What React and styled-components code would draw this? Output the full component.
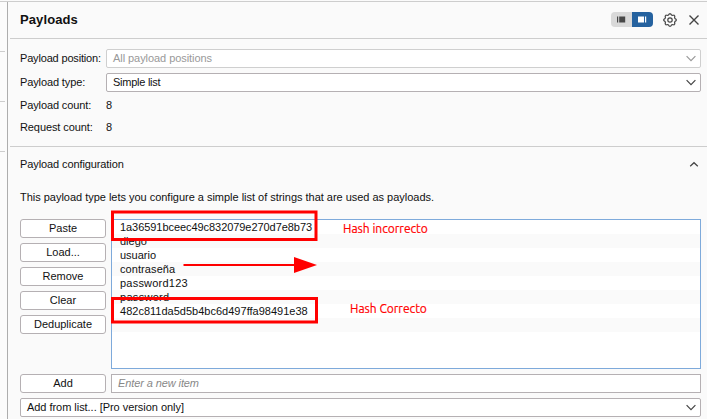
import React from 'react';
import styled, { createGlobalStyle } from 'styled-components';

const GlobalStyle = createGlobalStyle`
  * { box-sizing: border-box; }
  body {
    margin: 0;
    overflow: hidden;
    background: #fafafa;
    color: #111;
    font: 11px/14px "Liberation Sans", Arial, sans-serif;
  }
`;

const Window = styled.div`
  position: relative;
  display: flex;
  width: 707px;
  height: 419px;
  padding-top: 2px;
  overflow: hidden;
  background: linear-gradient(#fafafa 1px, #cdcdcd 1px, #cdcdcd 2px, transparent 2px);
`;

const Rail = styled.div`
  display: flex;
  flex-direction: column;
  gap: 49px;
  flex: 0 0 8px;
  padding-top: 49px;
  background: #fbfbfb;
  border-right: 1px solid #adadad;
`;

const RailLine = styled.div`
  width: 5px;
  height: 1px;
  background: #cdcdcd;
`;

const Panel = styled.main`
  flex: 1;
  min-width: 0;
  padding-left: 2px;
`;

const Header = styled.header`
  display: flex;
  align-items: center;
  height: 37px;
  padding: 0 7px 1px 10px;
  border-bottom: 1px solid #cdcdcd;
`;

const Title = styled.h1`
  flex: 1;
  margin: 0;
  padding-top: 1px;
  font-size: 13px;
  line-height: 18px;
  font-weight: bold;
  letter-spacing: 0.1px;
  color: #111;
`;

const Toggle = styled.div`
  display: flex;
  width: 42px;
  height: 15px;
  margin-right: 10px;
  overflow: hidden;
  border-radius: 4px;
`;

const ToggleHalf = styled.div`
  display: flex;
  align-items: center;
  justify-content: center;
  flex: 1;
  color: ${(p) => (p.$active ? '#fff' : '#484848')};
  background: ${(p) => (p.$active ? '#25629f' : '#d9d9d9')};
`;

const Icon = styled.svg`
  display: block;
  flex: none;
  fill: none;
  stroke: ${(p) => p.$color || '#444'};
  stroke-width: ${(p) => p.$weight || 1.2};
`;

const CloseIcon = styled(Icon)`
  margin-left: 11px;
`;

const Form = styled.section`
  display: grid;
  grid-template-columns: 86px 595px;
  grid-template-rows: 19px 19px 17px 17px;
  row-gap: 5px;
  height: 108px;
  padding: 10px 0 0 10px;
  border-bottom: 1px solid #cdcdcd;
`;

const Text = styled.span`
  white-space: nowrap;
  letter-spacing: ${(p) => p.$track || 0}px;
`;

const Field = styled(Text)`
  padding-top: ${(p) => p.$top || 0}px;
`;

const Select = styled.div`
  display: flex;
  align-items: center;
  justify-content: space-between;
  height: 19px;
  padding: 0 4px 1px 6px;
  background: #fff;
  border: 1px solid ${(p) => (p.$disabled ? '#cfcfcf' : '#b5b0b3')};
  border-radius: 2px;
  color: ${(p) => (p.$disabled ? '#999' : '#111')};
`;

const Section = styled.section`
  padding: 0 6px 0 10px;
`;

const SectionHead = styled.div`
  display: flex;
  align-items: center;
  justify-content: space-between;
  height: 34px;
  padding-right: 2px;
`;

const Description = styled.p`
  margin: 9px 0 15px;
`;

const Columns = styled.div`
  display: grid;
  grid-template-columns: 86px 590px;
  gap: 5px;
  margin-bottom: 5px;
`;

const Buttons = styled.div`
  display: flex;
  flex-direction: column;
  gap: 5px;
`;

const Button = styled.button`
  height: 19px;
  padding: 0;
  color: #111;
  background: #fff;
  border: 1px solid #b5b0b3;
  border-radius: 3px;
  font: inherit;
  line-height: 17px;
`;

const List = styled.div`
  height: 150px;
  background: #fff;
  border: 1px solid #7eaadb;
`;

const Item = styled.div`
  height: 14px;
  padding-left: 8px;
  &:nth-child(even) { background: #fafafa; }
`;

const Input = styled.div`
  height: 19px;
  padding-left: 6px;
  line-height: 17px;
  font-style: italic;
  color: #888;
  background: #fff;
  border: 1px solid #b5b0b3;
`;

const Annotations = styled.svg`
  position: absolute;
  inset: 0;
  pointer-events: none;
`;

const Note = styled.div`
  position: absolute;
  left: ${(p) => p.$x}px;
  top: ${(p) => p.$y}px;
  color: #f00;
  font: 13px/16px Ubuntu, "Noto Sans", sans-serif;
  -webkit-text-stroke: 0.2px #f00;
  transform: scaleX(0.925);
  transform-origin: 0 0;
  white-space: nowrap;
`;

const Chevron = ({ color, up }) => (
  <Icon width="10" height="7" viewBox="0 0 10 7" $color={color}>
    <path d={up ? 'M1.2 5.3 5 1.7 8.8 5.3' : 'M.6 1.2 5 5.6 9.4 1.2'} />
  </Icon>
);

const gearPath = Array.from({ length: 64 }, (_, i) => {
  const angle = (i / 64) * Math.PI * 2;
  const radius = 5.7 + 0.55 * Math.tanh(2 * Math.cos(angle * 8));
  return `${i ? 'L' : 'M'}${(7 + radius * Math.cos(angle)).toFixed(2)} ${(7 + radius * Math.sin(angle)).toFixed(2)}`;
}).join(' ') + 'Z';

const items = [
  ['1a36591bceec49c832079e270d7e8b73', -0.06],
  ['diego', 0],
  ['usuario', 0],
  ['contraseña', 0.08],
  ['password123', 0.22],
  ['password', 0.3],
  ['482c811da5d5b4bc6d497ffa98491e38', 0.01],
  ['', 0],
];

export default function App() {
  return (
    <>
      <GlobalStyle />
      <Window>
        <Rail><RailLine /><RailLine /><RailLine /></Rail>
        <Panel>
          <Header>
            <Title>Payloads</Title>
            <Toggle>
              <ToggleHalf>
                <svg width="9" height="7" fill="currentColor"><path d="M0 .5h1.2v6H0zM2.2 .5h6v6h-6z" /></svg>
              </ToggleHalf>
              <ToggleHalf $active>
                <svg width="9" height="7" fill="currentColor"><path d="M0 .5h6v6H0zM7 .5h1.2v6H7z" /></svg>
              </ToggleHalf>
            </Toggle>
            <Icon width="14" height="14" viewBox="0 0 14 14">
              <path d={gearPath} />
              <circle cx="7" cy="7" r="2.2" />
            </Icon>
            <CloseIcon width="12" height="12" viewBox="0 0 12 12" $weight={1.4}>
              <path d="m1.5 1.5 9 9m0-9-9 9" />
            </CloseIcon>
          </Header>
          <Form>
            <Field $top={2} $track={-0.17}>Payload position:</Field>
            <Select $disabled><Text $track={-0.06}>All payload positions</Text><Chevron color="#999" /></Select>
            <Field $top={2} $track={-0.12}>Payload type:</Field>
            <Select><Text $track={-0.25}>Simple list</Text><Chevron /></Select>
            <Field $top={1} $track={-0.12}>Payload count:</Field>
            <Field $top={1}>8</Field>
            <Field $top={1} $track={-0.1}>Request count:</Field>
            <Field $top={1}>8</Field>
          </Form>
          <Section>
            <SectionHead><Text $track={-0.1}>Payload configuration</Text><Chevron up /></SectionHead>
            <Description>
              <Text $track={-0.02}>This payload type lets you configure a simple list of strings that are used as payloads.</Text>
            </Description>
            <Columns>
              <Buttons>
                {['Paste', 'Load...', 'Remove', 'Clear', 'Deduplicate'].map((name) => <Button key={name}>{name}</Button>)}
              </Buttons>
              <List>
                {items.map(([item, track], i) => <Item key={i}><Text $track={track}>{item}</Text></Item>)}
              </List>
              <Button>Add</Button>
              <Input><Text $track={-0.1}>Enter a new item</Text></Input>
            </Columns>
            <Select><Text $track={-0.04}>Add from list... [Pro version only]</Text><Chevron /></Select>
          </Section>
        </Panel>
        <Annotations width="707" height="419" fill="none" stroke="#f00">
          <rect x="112.5" y="212" width="203.5" height="27.5" strokeWidth="3" />
          <rect x="112.5" y="298.5" width="204" height="23.5" strokeWidth="3" />
          <path d="M183.5 265H296" strokeWidth="2.2" />
          <path d="M294 257v16l23-8z" fill="#f00" stroke="none" />
        </Annotations>
        <Note $x={342.5} $y={220}>Hash incorrecto</Note>
        <Note $x={349.5} $y={300}>Hash Correcto</Note>
      </Window>
    </>
  );
}
